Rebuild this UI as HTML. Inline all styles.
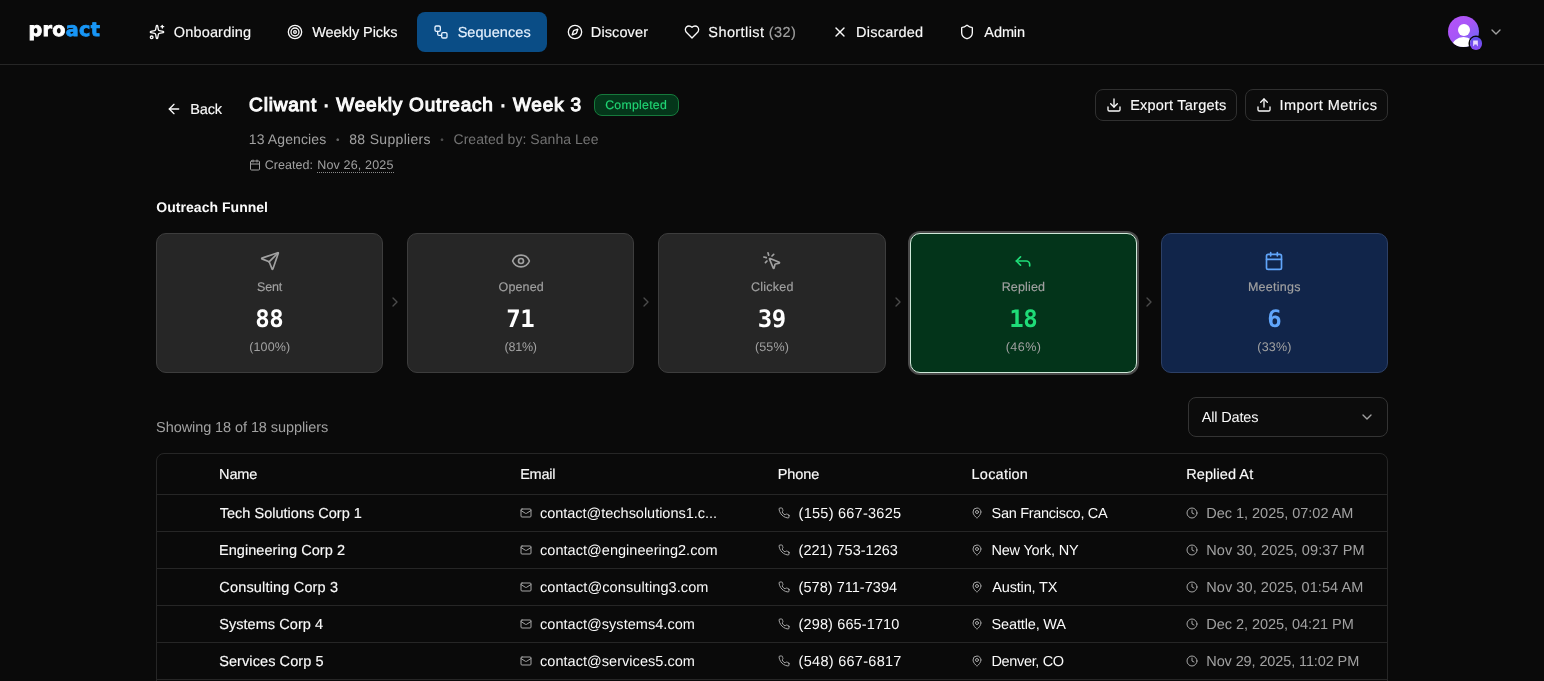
<!DOCTYPE html>
<html lang="en">
<head>
<meta charset="utf-8">
<title>Cliwant · Weekly Outreach · Week 3 – proact</title>
<style>
*{box-sizing:border-box;margin:0;padding:0}
html,body{width:1544px;height:681px;overflow:hidden;background:#0a0a0a}
body{font-family:"Liberation Sans",sans-serif;color:#fafafa;font-size:14px;line-height:20px}
#app{position:absolute;left:0;top:0;width:1544px;height:681px;overflow:hidden;background:#0a0a0a;will-change:transform;text-rendering:geometricPrecision}
svg{position:absolute;display:block;fill:none;stroke:currentColor;stroke-width:2;stroke-linecap:round;stroke-linejoin:round;overflow:visible}
a{color:inherit;text-decoration:none}
button{font:inherit;color:inherit;margin:0;padding:0;text-align:left;text-rendering:inherit;letter-spacing:inherit;cursor:pointer;appearance:none;-webkit-appearance:none;overflow:visible}
ul,li{list-style:none}
.box{position:absolute}
/* .t : absolutely positioned one-line text; "top" is the baseline, the glyph box is pulled up by its line-height */
.t{position:absolute;white-space:pre;line-height:20px;height:20px;margin-top:-14px;font-size:14.5px;font-weight:400}
.s12{font-size:12.5px;line-height:16px;height:16px;margin-top:-12px}
.s20{font-size:19px;line-height:28px;height:28px;margin-top:-20.3px;font-weight:400;-webkit-text-stroke:1.1px currentColor}
.b{font-weight:700;font-size:14px;margin-top:-15px}
.m{-webkit-text-stroke:0.15px currentColor}
.mut{color:#a1a1a1}
.dim{color:#737373}
.s14{font-size:14px;margin-top:-15px}
.dot{font-size:10px;color:#666}
/* header */
header{position:absolute;left:0;top:0;width:1544px;height:65px;border-bottom:1px solid #262626}
.logo{font-family:"DejaVu Sans","Liberation Sans",sans-serif;font-weight:700;font-size:19.2px;line-height:28px;height:28px;margin-top:-21.6px;color:#fff;-webkit-text-stroke:0.8px currentColor}
.logo b{color:#1896f6;font-weight:700}
nav li{position:absolute;top:12px;height:40px;border-radius:8px}
nav li.on{background:#0a4d86}
nav li.on .t, nav li.on svg{color:#e6f2ff}
.cnt{color:#a1a1a1}
.avatar{left:1448.3px;top:16.1px;width:30.8px;height:30.8px;border-radius:50%;background:linear-gradient(140deg,#b653f8 0%,#a855f7 45%,#6a68f5 92%);overflow:hidden}
.avatar i{position:absolute;background:#fff;border-radius:50%}
.abadge{left:1469.6px;top:37px;width:12.6px;height:12.6px;border-radius:50%;background:linear-gradient(180deg,#5b4fe8,#8b4cf6);box-shadow:0 0 0 1.5px #0a0a0a}
/* page head */
.pill{left:594px;top:94px;width:85px;height:22px;border:1px solid #167a3c;background:#04361a;border-radius:8px}
.pill .t{color:#21d675;font-size:12.3px}
.btn{top:89px;height:32px;border:1px solid #303030;border-radius:8px;background:#0c0c0c}
.date{border-bottom:1px dotted #8a8a8a}
/* funnel */
.card{position:absolute;top:233px;height:140px;border:1px solid #3d3d3d;border-radius:10px;background:#262626}
.card svg{color:#a1a1a1}
.card .num{position:absolute;text-align:center;font-family:"DejaVu Sans Mono","Liberation Mono",monospace;font-weight:700;font-size:24px;line-height:32px;height:32px;margin-top:-25px;letter-spacing:-0.5px;text-indent:-0.5px;color:#fff}
.card.g{background:#03341a;border-color:#cfe9d9;box-shadow:0 0 0 2px #4a4a4a}
.card.g svg,.card.g .num{color:#1fdc78}
.card.bl{background:#11254a;border-color:#2d4066}
.card.bl svg,.card.bl .num{color:#60a5fa}
.sep{color:#4b4b4b}
/* list */
.sel{left:1188px;top:397px;width:200px;height:40px;border:1px solid #343434;border-radius:8px;background:#0c0c0c}
.sel svg{color:#a1a1a1}
.tbl{left:156px;top:453px;width:1232px;height:300px;border:1px solid #262626;border-radius:8px;overflow:hidden}
.tr{position:absolute;left:0;width:1230px;border-bottom:1px solid #262626}
.tr svg{color:#a6a6a6}
</style>
</head>
<body>
<div id="app">
<header>
<a id="logo" href="#" aria-label="proact" class="t logo" style="left:28.39px;top:38px;letter-spacing:0.34px;">pro<b>act</b></a>
<nav><ul>
<li style="left:137px;width:126px">
<svg viewBox="0 0 24 24" style="left:12px;top:12px;width:16px;height:16px;"><path d="M11.017 2.814a1 1 0 0 1 1.966 0l1.051 5.558a2 2 0 0 0 1.594 1.594l5.558 1.051a1 1 0 0 1 0 1.966l-5.558 1.051a2 2 0 0 0-1.594 1.594l-1.051 5.558a1 1 0 0 1-1.966 0l-1.051-5.558a2 2 0 0 0-1.594-1.594l-5.558-1.051a1 1 0 0 1 0-1.966l5.558-1.051a2 2 0 0 0 1.594-1.594z"/><path d="M20 2v4"/><path d="M22 4h-4"/><circle cx="4" cy="20" r="2"/></svg>
<a id="n1" href="#" class="t m" style="left:36.7px;top:25px;letter-spacing:0.18px;">Onboarding</a>
</li>
<li style="left:275px;width:134px">
<svg viewBox="0 0 24 24" style="left:12px;top:12px;width:16px;height:16px;"><circle cx="12" cy="12" r="10"/><circle cx="12" cy="12" r="6"/><circle cx="12" cy="12" r="2"/></svg>
<a id="n2" href="#" class="t m" style="left:37.28px;top:25px;letter-spacing:-0.07px;">Weekly Picks</a>
</li>
<li class="on" style="left:417px;width:130px">
<svg viewBox="0 0 24 24" style="left:16px;top:12px;width:16px;height:16px;"><rect width="8" height="8" x="3" y="3" rx="2"/><path d="M7 11v4a2 2 0 0 0 2 2h4"/><rect width="8" height="8" x="13" y="13" rx="2"/></svg>
<a id="n3" href="#" aria-current="page" class="t m" style="left:40.64px;top:25px;letter-spacing:0.06px;">Sequences</a>
</li>
<li style="left:555px;width:105px">
<svg viewBox="0 0 24 24" style="left:12px;top:12px;width:16px;height:16px;"><path d="m16.24 7.76-1.804 5.411a2 2 0 0 1-1.265 1.265L7.76 16.24l1.804-5.411a2 2 0 0 1 1.265-1.265z"/><circle cx="12" cy="12" r="10"/></svg>
<a id="n4" href="#" class="t m" style="left:35.87px;top:25px;letter-spacing:0.1px;">Discover</a>
</li>
<li style="left:672px;width:136px">
<svg viewBox="0 0 24 24" style="left:12px;top:12px;width:16px;height:16px;"><path d="M19 14c1.49-1.46 3-3.21 3-5.5A5.5 5.5 0 0 0 16.5 3c-1.76 0-3 .5-4.5 2-1.5-1.5-2.74-2-4.5-2A5.5 5.5 0 0 0 2 8.5c0 2.3 1.5 4.05 3 5.5l7 7Z"/></svg>
<a id="n5" href="#" class="t m" style="left:36.36px;top:25px;letter-spacing:0.4px;">Shortlist <span class="cnt">(32)</span></a>
</li>
<li style="left:820px;width:115px">
<svg viewBox="0 0 24 24" style="left:12px;top:12px;width:16px;height:16px;"><path d="M18 6 6 18"/><path d="m6 6 12 12"/></svg>
<a id="n6" href="#" class="t m" style="left:36.11px;top:25px;letter-spacing:0.21px;">Discarded</a>
</li>
<li style="left:947px;width:90px">
<svg viewBox="0 0 24 24" style="left:12px;top:12px;width:16px;height:16px;"><path d="M20 13c0 5-3.5 7.5-7.66 8.95a1 1 0 0 1-.67-.01C7.5 20.5 4 18 4 13V6a1 1 0 0 1 1-1c2 0 4.5-1.2 6.24-2.72a1.17 1.17 0 0 1 1.52 0C14.51 3.81 17 5 19 5a1 1 0 0 1 1 1z"/></svg>
<a id="n7" href="#" class="t m" style="left:37.36px;top:25px;letter-spacing:-0.11px;">Admin</a>
</li>
</ul></nav>
<div class="box avatar"><i style="left:9.6px;top:8.2px;width:11.8px;height:11.8px"></i><i style="left:4px;top:21.4px;width:23px;height:20px"></i></div>
<div class="box abadge"><svg viewBox="0 0 24 24" style="left:2.8px;top:2.8px;width:7px;height:7px;fill:#ead9ff;stroke:none"><path d="M4 2h16v20l-4-4v-3H8v3l-4 4z"/></svg></div>
<svg viewBox="0 0 24 24" style="left:1488px;top:24px;width:16px;height:16px;color:#a1a1a1"><path d="m6 9 6 6 6-6"/></svg>
</header>
<main>
<section>
<svg viewBox="0 0 24 24" style="left:166px;top:101px;width:16px;height:16px;"><path d="m12 19-7-7 7-7"/><path d="M19 12H5"/></svg>
<a id="back" href="#" class="t m" style="left:190.37px;top:114px;letter-spacing:-0.18px;">Back</a>
<h1 id="title" class="t s20" style="left:249.11px;top:112px;letter-spacing:0.8px;">Cliwant · Weekly Outreach · Week 3</h1>
<div class="box pill"><span id="pill" class="t s12 m" style="left:10.16px;top:14px;letter-spacing:0.27px;">Completed</span></div>
<span id="m1" class="t mut s14" style="left:248.78px;top:144px;letter-spacing:0.11px;">13 Agencies</span>
<span id="d1" class="t dot" style="left:336.07px;top:145.2px;">•</span>
<span id="m2" class="t mut s14" style="left:349.26px;top:144px;letter-spacing:0.32px;">88 Suppliers</span>
<span id="d2" class="t dot" style="left:440.36px;top:145.2px;color:#4d4d4d;">•</span>
<span id="m3" class="t dim s14" style="left:453.49px;top:144px;letter-spacing:0.05px;">Created by: Sanha Lee</span>
<svg viewBox="0 0 24 24" style="left:249px;top:159px;width:12px;height:12px;color:#a1a1a1"><path d="M8 2v4"/><path d="M16 2v4"/><rect width="18" height="18" x="3" y="4" rx="2"/><path d="M3 10h18"/></svg>
<span id="c1" class="t s12 mut" style="left:264.66px;top:169px;letter-spacing:0.05px;">Created:</span>
<span id="c2" class="t s12 mut date" style="left:317.22px;top:169px;letter-spacing:0.16px;">Nov 26, 2025</span>
<button type="button" class="box btn" style="left:1095px;width:142px"><svg viewBox="0 0 24 24" style="left:10px;top:7px;width:16px;height:16px;"><path d="M21 15v4a2 2 0 0 1-2 2H5a2 2 0 0 1-2-2v-4"/><path d="m7 10 5 5 5-5"/><path d="M12 15V3"/></svg><span id="b1" class="t m" style="left:34.13px;top:20px;letter-spacing:0.22px;">Export Targets</span></button>
<button type="button" class="box btn" style="left:1245px;width:143px"><svg viewBox="0 0 24 24" style="left:10px;top:7px;width:16px;height:16px;"><path d="M21 15v4a2 2 0 0 1-2 2H5a2 2 0 0 1-2-2v-4"/><path d="m17 8-5-5-5 5"/><path d="M12 3v12"/></svg><span id="b2" class="t m" style="left:33.62px;top:20px;letter-spacing:0.42px;">Import Metrics</span></button>
</section>
<section>
<h2 id="of" class="t b" style="left:156.37px;top:212px;letter-spacing:0.03px;">Outreach Funnel</h2>
<article class="card" style="left:156px;width:227px">
<svg viewBox="0 0 24 24" style="left:103px;top:16.5px;width:20px;height:20px;"><path d="M14.536 21.686a.5.5 0 0 0 .937-.024l6.5-19a.496.496 0 0 0-.635-.635l-19 6.5a.5.5 0 0 0-.024.937l7.93 3.18a2 2 0 0 1 1.112 1.11z"/><path d="m21.854 2.147-10.94 10.939"/></svg>
<span id="k1l" class="t s12 mut m" style="left:99.97px;top:56.8px;letter-spacing:-0.18px;">Sent</span>
<strong class="num" style="left:0;width:225px;top:94px">88</strong>
<span id="k1p" class="t s12 mut" style="left:92.31px;top:117px;letter-spacing:0.09px;">(100%)</span>
</article>
<svg class="sep" viewBox="0 0 24 24" style="left:387px;top:294px;width:16px;height:16px;"><path d="m9 18 6-6-6-6"/></svg>
<article class="card" style="left:407px;width:227px">
<svg viewBox="0 0 24 24" style="left:103px;top:16.5px;width:20px;height:20px;"><path d="M2.062 12.348a1 1 0 0 1 0-.696 10.75 10.75 0 0 1 19.876 0 1 1 0 0 1 0 .696 10.75 10.75 0 0 1-19.876 0"/><circle cx="12" cy="12" r="3"/></svg>
<span id="k2l" class="t s12 mut m" style="left:90.54px;top:56.8px;letter-spacing:0.13px;">Opened</span>
<strong class="num" style="left:0;width:225px;top:94px">71</strong>
<span id="k2p" class="t s12 mut" style="left:96.47px;top:117px;letter-spacing:-0.22px;">(81%)</span>
</article>
<svg class="sep" viewBox="0 0 24 24" style="left:638px;top:294px;width:16px;height:16px;"><path d="m9 18 6-6-6-6"/></svg>
<article class="card" style="left:658px;width:228px">
<svg viewBox="0 0 24 24" style="left:103px;top:16.5px;width:20px;height:20px;"><path d="M14 4.1 12 6"/><path d="m5.1 8-2.9-.8"/><path d="m6 12-1.900 2"/><path d="M7.2 2.2 8 5.1"/><path d="M9.037 9.69a.498.498 0 0 1 .653-.653l11 4.5a.5.5 0 0 1-.074.949l-4.349 1.041a1 1 0 0 0-.74.739l-1.040 4.35a.5.5 0 0 1-.95.074z"/></svg>
<span id="k3l" class="t s12 mut m" style="left:92.02px;top:56.8px;letter-spacing:0.23px;">Clicked</span>
<strong class="num" style="left:0;width:226px;top:94px">39</strong>
<span id="k3p" class="t s12 mut" style="left:95.98px;top:117px;letter-spacing:0.12px;">(55%)</span>
</article>
<svg class="sep" viewBox="0 0 24 24" style="left:890px;top:294px;width:16px;height:16px;"><path d="m9 18 6-6-6-6"/></svg>
<article class="card g" style="left:910px;width:227px">
<svg viewBox="0 0 24 24" style="left:102px;top:16.5px;width:20px;height:20px;"><path d="m9 17-5-5 5-5"/><path d="M20 18v-2a4 4 0 0 0-4-4H4"/></svg>
<span id="k4l" class="t s12 mut m" style="left:90.67px;top:56.8px;letter-spacing:0.17px;">Replied</span>
<strong class="num" style="left:0;width:225px;top:94px">18</strong>
<span id="k4p" class="t s12 mut" style="left:94.71px;top:117px;letter-spacing:0.47px;">(46%)</span>
</article>
<svg class="sep" viewBox="0 0 24 24" style="left:1141px;top:294px;width:16px;height:16px;"><path d="m9 18 6-6-6-6"/></svg>
<article class="card bl" style="left:1161px;width:227px">
<svg viewBox="0 0 24 24" style="left:102px;top:16.5px;width:20px;height:20px;"><path d="M8 2v4"/><path d="M16 2v4"/><rect width="18" height="18" x="3" y="4" rx="2"/><path d="M3 10h18"/></svg>
<span id="k5l" class="t s12 mut m" style="left:85.92px;top:56.8px;letter-spacing:0.26px;">Meetings</span>
<strong class="num" style="left:0;width:225px;top:94px">6</strong>
<span id="k5p" class="t s12 mut" style="left:95.37px;top:117px;letter-spacing:0.19px;">(33%)</span>
</article>
</section>
<section>
<p id="sh" class="t mut" style="left:156.08px;top:432px;letter-spacing:-0.08px;">Showing 18 of 18 suppliers</p>
<button type="button" role="combobox" aria-expanded="false" class="box sel"><span id="ad" class="t " style="left:12.73px;top:24px;letter-spacing:-0.17px;">All Dates</span><svg viewBox="0 0 24 24" style="left:170px;top:11px;width:16px;height:16px;"><path d="m6 9 6 6 6-6"/></svg></button>
<div class="box tbl" role="table" aria-label="Suppliers">
<div class="tr" role="row" style="top:0;height:41px">
<span id="h1" role="columnheader" class="t m" style="left:62.11px;top:25px;letter-spacing:-0.15px;">Name</span>
<span id="h2" role="columnheader" class="t m" style="left:363.13px;top:25px;letter-spacing:-0.23px;">Email</span>
<span id="h3" role="columnheader" class="t m" style="left:620.7px;top:25px;letter-spacing:-0.05px;">Phone</span>
<span id="h4" role="columnheader" class="t m" style="left:814.59px;top:25px;letter-spacing:0.22px;">Location</span>
<span id="h5" role="columnheader" class="t m" style="left:1029.25px;top:25px;letter-spacing:0.09px;">Replied At</span>
</div>
<div class="tr" role="row" style="top:41px;height:37px">
<span id="r0a" role="cell" class="t m" style="left:62.77px;top:23px;letter-spacing:0.01px;">Tech Solutions Corp 1</span>
<svg viewBox="0 0 24 24" style="left:363px;top:12px;width:12px;height:12px;"><rect width="20" height="16" x="2" y="4" rx="2"/><path d="m22 7-8.970 5.700a1.940 1.940 0 0 1-2.060 0L2 7"/></svg>
<span id="r0b" role="cell" class="t " style="left:383.01px;top:23px;letter-spacing:-0.02px;">contact@techsolutions1.c...</span>
<svg viewBox="0 0 24 24" style="left:621px;top:12px;width:12px;height:12px;"><path d="M22 16.920v3a2 2 0 0 1-2.180 2 19.790 19.790 0 0 1-8.630-3.070 19.500 19.500 0 0 1-6-6 19.790 19.790 0 0 1-3.070-8.670A2 2 0 0 1 4.110 2h3a2 2 0 0 1 2 1.720 12.840 12.840 0 0 0 .700 2.810 2 2 0 0 1-.450 2.110L8.090 9.910a16 16 0 0 0 6 6l1.270-1.270a2 2 0 0 1 2.110-.450 12.840 12.840 0 0 0 2.810.700A2 2 0 0 1 22 16.920z"/></svg>
<span id="r0c" role="cell" class="t " style="left:641.62px;top:23px;letter-spacing:0.25px;">(155) 667-3625</span>
<svg viewBox="0 0 24 24" style="left:814px;top:12px;width:12px;height:12px;"><path d="M20 10c0 4.993-5.539 10.193-7.399 11.799a1 1 0 0 1-1.202 0C9.539 20.193 4 14.993 4 10a8 8 0 0 1 16 0"/><circle cx="12" cy="10" r="3"/></svg>
<span id="r0d" role="cell" class="t " style="left:834.61px;top:23px;letter-spacing:-0.3px;">San Francisco, CA</span>
<svg viewBox="0 0 24 24" style="left:1029px;top:12px;width:12px;height:12px;"><circle cx="12" cy="12" r="10"/><path d="M12 6v6l4 2"/></svg>
<span id="r0e" role="cell" class="t mut" style="left:1049.28px;top:23px;letter-spacing:-0.02px;">Dec 1, 2025, 07:02 AM</span>
</div>
<div class="tr" role="row" style="top:78px;height:37px">
<span id="r1a" role="cell" class="t m" style="left:61.9px;top:23px;letter-spacing:0.07px;">Engineering Corp 2</span>
<svg viewBox="0 0 24 24" style="left:363px;top:12px;width:12px;height:12px;"><rect width="20" height="16" x="2" y="4" rx="2"/><path d="m22 7-8.970 5.700a1.940 1.940 0 0 1-2.060 0L2 7"/></svg>
<span id="r1b" role="cell" class="t " style="left:383.01px;top:23px;letter-spacing:0.04px;">contact@engineering2.com</span>
<svg viewBox="0 0 24 24" style="left:621px;top:12px;width:12px;height:12px;"><path d="M22 16.920v3a2 2 0 0 1-2.180 2 19.790 19.790 0 0 1-8.630-3.070 19.500 19.500 0 0 1-6-6 19.790 19.790 0 0 1-3.070-8.670A2 2 0 0 1 4.110 2h3a2 2 0 0 1 2 1.720 12.840 12.840 0 0 0 .700 2.810 2 2 0 0 1-.450 2.110L8.090 9.910a16 16 0 0 0 6 6l1.270-1.270a2 2 0 0 1 2.110-.450 12.840 12.840 0 0 0 2.810.700A2 2 0 0 1 22 16.920z"/></svg>
<span id="r1c" role="cell" class="t " style="left:641.62px;top:23px;letter-spacing:0.01px;">(221) 753-1263</span>
<svg viewBox="0 0 24 24" style="left:814px;top:12px;width:12px;height:12px;"><path d="M20 10c0 4.993-5.539 10.193-7.399 11.799a1 1 0 0 1-1.202 0C9.539 20.193 4 14.993 4 10a8 8 0 0 1 16 0"/><circle cx="12" cy="10" r="3"/></svg>
<span id="r1d" role="cell" class="t " style="left:834.46px;top:23px;letter-spacing:-0.2px;">New York, NY</span>
<svg viewBox="0 0 24 24" style="left:1029px;top:12px;width:12px;height:12px;"><circle cx="12" cy="12" r="10"/><path d="M12 6v6l4 2"/></svg>
<span id="r1e" role="cell" class="t mut" style="left:1049.28px;top:23px;letter-spacing:0.09px;">Nov 30, 2025, 09:37 PM</span>
</div>
<div class="tr" role="row" style="top:115px;height:37px">
<span id="r2a" role="cell" class="t m" style="left:62.34px;top:23px;letter-spacing:0.17px;">Consulting Corp 3</span>
<svg viewBox="0 0 24 24" style="left:363px;top:12px;width:12px;height:12px;"><rect width="20" height="16" x="2" y="4" rx="2"/><path d="m22 7-8.970 5.700a1.940 1.940 0 0 1-2.060 0L2 7"/></svg>
<span id="r2b" role="cell" class="t " style="left:383.01px;top:23px;letter-spacing:0.1px;">contact@consulting3.com</span>
<svg viewBox="0 0 24 24" style="left:621px;top:12px;width:12px;height:12px;"><path d="M22 16.920v3a2 2 0 0 1-2.180 2 19.790 19.790 0 0 1-8.630-3.070 19.500 19.500 0 0 1-6-6 19.790 19.790 0 0 1-3.070-8.670A2 2 0 0 1 4.110 2h3a2 2 0 0 1 2 1.720 12.840 12.840 0 0 0 .700 2.810 2 2 0 0 1-.450 2.110L8.090 9.910a16 16 0 0 0 6 6l1.270-1.270a2 2 0 0 1 2.110-.450 12.840 12.840 0 0 0 2.810.700A2 2 0 0 1 22 16.920z"/></svg>
<span id="r2c" role="cell" class="t " style="left:641.62px;top:23px;letter-spacing:0.03px;">(578) 711-7394</span>
<svg viewBox="0 0 24 24" style="left:814px;top:12px;width:12px;height:12px;"><path d="M20 10c0 4.993-5.539 10.193-7.399 11.799a1 1 0 0 1-1.202 0C9.539 20.193 4 14.993 4 10a8 8 0 0 1 16 0"/><circle cx="12" cy="10" r="3"/></svg>
<span id="r2d" role="cell" class="t " style="left:835.31px;top:23px;letter-spacing:-0.18px;">Austin, TX</span>
<svg viewBox="0 0 24 24" style="left:1029px;top:12px;width:12px;height:12px;"><circle cx="12" cy="12" r="10"/><path d="M12 6v6l4 2"/></svg>
<span id="r2e" role="cell" class="t mut" style="left:1049.28px;top:23px;letter-spacing:0.07px;">Nov 30, 2025, 01:54 AM</span>
</div>
<div class="tr" role="row" style="top:152px;height:37px">
<span id="r3a" role="cell" class="t m" style="left:62.18px;top:23px;letter-spacing:0.06px;">Systems Corp 4</span>
<svg viewBox="0 0 24 24" style="left:363px;top:12px;width:12px;height:12px;"><rect width="20" height="16" x="2" y="4" rx="2"/><path d="m22 7-8.970 5.700a1.940 1.940 0 0 1-2.060 0L2 7"/></svg>
<span id="r3b" role="cell" class="t " style="left:383.01px;top:23px;letter-spacing:0.04px;">contact@systems4.com</span>
<svg viewBox="0 0 24 24" style="left:621px;top:12px;width:12px;height:12px;"><path d="M22 16.920v3a2 2 0 0 1-2.180 2 19.790 19.790 0 0 1-8.630-3.070 19.500 19.500 0 0 1-6-6 19.790 19.790 0 0 1-3.070-8.670A2 2 0 0 1 4.110 2h3a2 2 0 0 1 2 1.720 12.840 12.840 0 0 0 .700 2.810 2 2 0 0 1-.450 2.110L8.090 9.910a16 16 0 0 0 6 6l1.270-1.270a2 2 0 0 1 2.110-.450 12.840 12.840 0 0 0 2.810.700A2 2 0 0 1 22 16.920z"/></svg>
<span id="r3c" role="cell" class="t " style="left:641.62px;top:23px;letter-spacing:0.12px;">(298) 665-1710</span>
<svg viewBox="0 0 24 24" style="left:814px;top:12px;width:12px;height:12px;"><path d="M20 10c0 4.993-5.539 10.193-7.399 11.799a1 1 0 0 1-1.202 0C9.539 20.193 4 14.993 4 10a8 8 0 0 1 16 0"/><circle cx="12" cy="10" r="3"/></svg>
<span id="r3d" role="cell" class="t " style="left:834.61px;top:23px;letter-spacing:-0.16px;">Seattle, WA</span>
<svg viewBox="0 0 24 24" style="left:1029px;top:12px;width:12px;height:12px;"><circle cx="12" cy="12" r="10"/><path d="M12 6v6l4 2"/></svg>
<span id="r3e" role="cell" class="t mut" style="left:1049.28px;top:23px;letter-spacing:-0.04px;">Dec 2, 2025, 04:21 PM</span>
</div>
<div class="tr" role="row" style="top:189px;height:37px">
<span id="r4a" role="cell" class="t m" style="left:62.18px;top:23px;letter-spacing:0.09px;">Services Corp 5</span>
<svg viewBox="0 0 24 24" style="left:363px;top:12px;width:12px;height:12px;"><rect width="20" height="16" x="2" y="4" rx="2"/><path d="m22 7-8.970 5.700a1.940 1.940 0 0 1-2.060 0L2 7"/></svg>
<span id="r4b" role="cell" class="t " style="left:383.01px;top:23px;letter-spacing:0.04px;">contact@services5.com</span>
<svg viewBox="0 0 24 24" style="left:621px;top:12px;width:12px;height:12px;"><path d="M22 16.920v3a2 2 0 0 1-2.180 2 19.790 19.790 0 0 1-8.630-3.070 19.500 19.500 0 0 1-6-6 19.790 19.790 0 0 1-3.070-8.670A2 2 0 0 1 4.110 2h3a2 2 0 0 1 2 1.720 12.840 12.840 0 0 0 .700 2.810 2 2 0 0 1-.450 2.110L8.090 9.910a16 16 0 0 0 6 6l1.270-1.270a2 2 0 0 1 2.110-.450 12.840 12.840 0 0 0 2.810.700A2 2 0 0 1 22 16.920z"/></svg>
<span id="r4c" role="cell" class="t " style="left:641.62px;top:23px;letter-spacing:0.28px;">(548) 667-6817</span>
<svg viewBox="0 0 24 24" style="left:814px;top:12px;width:12px;height:12px;"><path d="M20 10c0 4.993-5.539 10.193-7.399 11.799a1 1 0 0 1-1.202 0C9.539 20.193 4 14.993 4 10a8 8 0 0 1 16 0"/><circle cx="12" cy="10" r="3"/></svg>
<span id="r4d" role="cell" class="t " style="left:834.46px;top:23px;letter-spacing:-0.34px;">Denver, CO</span>
<svg viewBox="0 0 24 24" style="left:1029px;top:12px;width:12px;height:12px;"><circle cx="12" cy="12" r="10"/><path d="M12 6v6l4 2"/></svg>
<span id="r4e" role="cell" class="t mut" style="left:1049.28px;top:23px;letter-spacing:-0.11px;">Nov 29, 2025, 11:02 PM</span>
</div>
</div>
</section>
</main>
</div>
</body>
</html>
